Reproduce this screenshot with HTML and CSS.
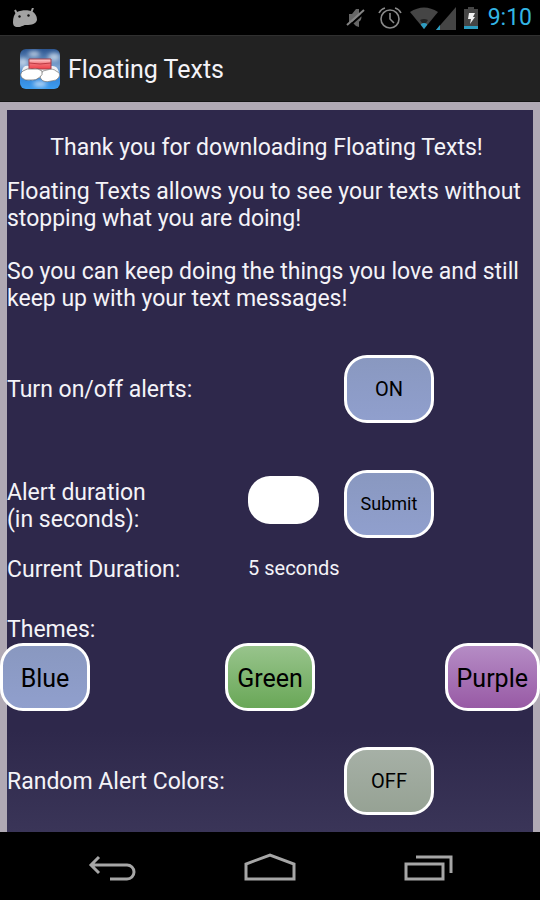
FILE: index.html
```html
<!DOCTYPE html>
<html lang="en">
<head>
<meta charset="utf-8">
<meta name="viewport" content="width=device-width, initial-scale=1">
<title>Floating Texts</title>
<link rel="stylesheet" href="styles.css">
</head>
<body>
<div class="status">
  <svg class="status-droid" width="26" height="20" viewBox="0 0 26 20" aria-hidden="true">
    <path d="M3 2 L5 6 M21 0 L19 5" stroke="#a3a3a3" stroke-width="2" fill="none"/>
    <path d="M5 4 C9 2 16 2 19 3 C24 5 25 9 25 12 C24 16 20 17 14 17 C11 17 10 19 6 19 C2 19 1 17 1 14 C1 10 2 6 5 4Z" fill="#a3a3a3"/>
    <circle cx="7.500" cy="8.500" r="1.200" fill="#111"/><circle cx="16.500" cy="7.500" r="1.200" fill="#111"/>
  </svg>
  <div class="status-icons">
    <svg width="20" height="22" viewBox="0 0 20 22" aria-hidden="true">
      <path d="M3 7 H6 L10 2 L13 2 V20 L10 19 L6 15 H3Z" fill="#666"/>
      <path d="M13 7 Q16 10 13 14" fill="none" stroke="#707070" stroke-width="2"/>
      <path d="M2 20 L19 5" stroke="#000" stroke-width="2"/>
      <path d="M1 18 L18 3" stroke="#858585" stroke-width="2"/>
    </svg>
    <svg class="status-alarm" width="24" height="24" viewBox="0 0 24 24" aria-hidden="true">
      <g fill="none" stroke="#8a8a8a" stroke-width="1.600">
        <circle cx="12" cy="13" r="9"/><path d="M12 7 V13 L16 17"/>
        <path d="M1 7 Q3 3 7 2 M17 2 Q21 3 23 7"/>
      </g>
    </svg>
    <svg class="status-wifi" width="28" height="22" viewBox="0 0 28 22" aria-hidden="true">
      <path d="M0 5 Q14 -4 28 5 L14 22Z" fill="#454545"/>
      <path d="M10 13 Q14 11 18 13 L16 16 H12Z" fill="#222"/>
      <path d="M11 17 Q14 15 17 17 L17 18 L14 22 L11 18Z" fill="#2d9cc0"/>
    </svg>
    <svg width="20" height="24" viewBox="0 0 20 24" aria-hidden="true">
      <path d="M20 1 V24 H0Z" fill="#454545"/>
      <path d="M4 19 V24 H0Z" fill="#2d9cc0"/>
    </svg>
    <svg class="status-battery" width="14" height="22" viewBox="0 0 14 22" aria-hidden="true">
      <path d="M4 0 H10 V2 H14 V19 H0 V2 H4Z" fill="#454545"/>
      <path d="M0 19 H14 V22 H0Z" fill="#2d9cc0"/>
      <path d="M5 6 H11 L9 10 H11 L6 17 L7 12 H4Z" fill="#f2f2f2"/>
    </svg>
    <span class="clock">9:10</span>
  </div>
</div>

<header class="appbar">
  <svg width="40" height="40" viewBox="0 0 40 40" aria-hidden="true">
    <defs>
      <linearGradient id="sky" x1="0" y1="0" x2="0" y2="1">
        <stop offset="0" stop-color="#2b5590"/><stop offset=".45" stop-color="#7da5d2"/>
        <stop offset=".7" stop-color="#3585d8"/><stop offset="1" stop-color="#3c9df0"/>
      </linearGradient>
      <linearGradient id="note" x1="0" y1="0" x2="0" y2="1">
        <stop offset="0" stop-color="#ffd4d4"/><stop offset=".5" stop-color="#f06f75"/><stop offset="1" stop-color="#f03f48"/>
      </linearGradient>
      <clipPath id="tile"><rect width="40" height="40" rx="6"/></clipPath>
      <filter id="mist"><feGaussianBlur stdDeviation="2"/></filter>
    </defs>
    <g clip-path="url(#tile)">
      <rect width="40" height="40" fill="url(#sky)"/>
      <g fill="#e4edf7" opacity=".7" filter="url(#mist)">
        <ellipse cx="14" cy="5" rx="6" ry="3"/><ellipse cx="34" cy="8" rx="6" ry="4"/>
        <ellipse cx="3" cy="13" rx="5" ry="4"/><ellipse cx="20" cy="35" rx="7" ry="3"/>
      </g>
      <path d="M2 22 Q3 16 9 17 H31 Q38 16 39 24 V29 H3Z" fill="#eef1f4"/>
      <path d="M9 10 H31 V20 H9Z" fill="url(#note)" stroke="#a53f49" stroke-width="1"/>
      <path d="M9 14 Q20 16 31 14" fill="none" stroke="#bd3a43" stroke-width="1"/>
      <path d="M21 25 Q22 21 27 21 Q33 19 36 22 Q41 24 39 28 Q37 32 31 32 Q24 34 21 30 Q19 27 21 25Z" fill="#fff" stroke="#777" stroke-width=".7"/>
      <path d="M3 22 Q7 19 12 20 Q19 19 22 22 Q23 26 20 28 Q16 32 11 31 Q5 32 2 29 Q-1 25 3 22Z" fill="#fff" stroke="#666" stroke-width=".7"/>
    </g>
  </svg>
  <h1>Floating Texts</h1>
</header>

<main class="panel">
  <h2 class="welcome">Thank you for downloading Floating Texts!</h2>
  <div class="intro">
    <p>Floating Texts allows you to see your texts without stopping what you are doing!</p>
    <p>So you can keep doing the things you love and still keep up with your text messages!</p>
  </div>
  <div class="row alerts">
    <span id="alerts-label">Turn on/off alerts:</span>
    <button class="btn blue action" type="button" aria-labelledby="alerts-label alerts-state"><span id="alerts-state">ON</span></button>
  </div>
  <form class="row duration">
    <label for="seconds">Alert duration<br>(in seconds):</label>
    <input id="seconds" type="text" inputmode="numeric">
    <button class="btn blue small action" type="button">Submit</button>
  </form>
  <div class="row current">
    <span>Current Duration:</span>
    <span class="value">5 seconds</span>
  </div>
  <h3 class="themes-title">Themes:</h3>
  <div class="themes">
    <button class="btn blue large" type="button">Blue</button>
    <button class="btn green large" type="button">Green</button>
    <button class="btn purple large" type="button">Purple</button>
  </div>
  <div class="row random">
    <span id="random-label">Random Alert Colors:</span>
    <button class="btn gray action" type="button" aria-labelledby="random-label random-state"><span id="random-state">OFF</span></button>
  </div>
</main>

<nav class="navbar">
  <button type="button" aria-label="Back">
    <svg width="48" height="32" viewBox="0 0 48 32" aria-hidden="true">
      <path d="M11 4 L3 12 L11 20 M3 12 H39 A7 7 0 0 1 39 26 H22" fill="none" stroke="#a6a6a6" stroke-width="3"/>
    </svg>
  </button>
  <button type="button" aria-label="Home">
    <svg width="52" height="32" viewBox="0 0 52 32" aria-hidden="true">
      <path d="M2 26 V11 L26 2 L50 11 V26Z" fill="none" stroke="#a6a6a6" stroke-width="3"/>
    </svg>
  </button>
  <button type="button" aria-label="Recent apps">
    <svg width="50" height="32" viewBox="0 0 50 32" aria-hidden="true">
      <path d="M2 11 H39 V26 H2Z M12 4 H47 V20" fill="none" stroke="#a6a6a6" stroke-width="3"/>
    </svg>
  </button>
</nav>
</body>
</html>
```
FILE: styles.css
```css
* { box-sizing: border-box; }

body {
  margin: 0;
  min-height: 100vh;
  display: flex;
  flex-direction: column;
  background: #000;
  color: #f4f3f8;
  font: 23px/27px Roboto, "Liberation Sans", sans-serif;
}

h1, h2, h3, p { margin: 0; font-size: inherit; font-weight: 400; }
svg { display: block; flex: none; }

.status {
  display: flex;
  justify-content: space-between;
  align-items: center;
  height: 35px;
  padding: 0 8px 0 12px;
}
.status-icons { display: flex; align-items: center; }
.status-alarm { margin-left: 12px; }
.status-wifi { margin: 0 -2px 0 8px; }
.status-battery { margin: 0 10px 0 8px; }
.clock { color: #33b5e5; font-size: 23px; }

.appbar {
  display: flex;
  align-items: center;
  gap: 8px;
  height: 67px;
  padding: 0 20px;
  background: #222;
  border-top: 1px solid #303030;
  border-bottom: 1px solid #151515;
}
.appbar h1 { padding-top: 3px; font-size: 25px; line-height: 32px; }

.panel {
  flex: 1;
  border: solid #b0a9b4;
  border-width: 8px 7px 0;
  padding: 24px 0 17px;
  background: linear-gradient(#2e284b 86%, #3a3558);
}
.welcome { padding-right: 7px; text-align: center; }
.intro { margin-top: 17px; display: grid; gap: 26px; }

.row {
  display: grid;
  grid-template-columns: 241fr 96fr 189fr;
  align-items: center;
}
.action { grid-column: 3; }
.alerts { margin-top: 43px; }
.alerts > span, .random > span { grid-column: 1 / 3; }
.duration { margin-top: 47px; }
.duration label { padding-top: 4px; }
.duration input {
  align-self: start;
  width: 71px;
  height: 48px;
  margin: 6px 0 0;
  padding: 0 12px;
  border: 0;
  border-radius: 22px;
  background: #fff;
  font: inherit;
}
.current { margin-top: 18px; align-items: start; }
.value { font-size: 20px; line-height: 24px; }
.themes-title { margin-top: 33px; }
.themes {
  display: grid;
  grid-template-columns: 1fr auto 1fr;
  margin: 0 -7px;
}
.random { margin-top: 36px; }

.btn {
  justify-self: start;
  min-width: 90px;
  height: 68px;
  padding: 0 9px;
  border: 3px solid #fff;
  border-radius: 23px;
  color: #000;
  font: 20px/24px Roboto, "Liberation Sans", sans-serif;
}
.small { font-size: 18px; }
.large { padding-top: 3px; font-size: 25px; }
.blue { background: linear-gradient(#8998c0, #909fcd); }
.green { background: linear-gradient(#98c48c, #69a757); }
.purple { justify-self: end; background: linear-gradient(#b58cc5, #985aa5); }
.gray { background: linear-gradient(#a6b0a6, #96a294); }

.navbar {
  display: flex;
  justify-content: space-between;
  align-items: center;
  height: 68px;
  padding: 6px 84px 0 86px;
}
.navbar button { padding: 0 2px; border: 0; background: none; }
```
